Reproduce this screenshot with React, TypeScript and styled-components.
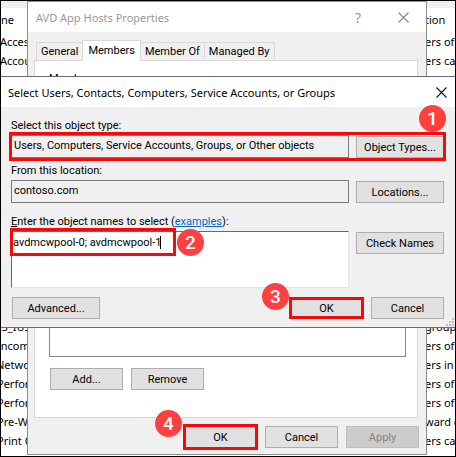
import React from "react";
import styled, { createGlobalStyle, css } from "styled-components";

const GlobalStyle = createGlobalStyle`
  * { box-sizing: border-box; }
  body { margin: 0; font-family: Roboto, "Liberation Sans", sans-serif; font-size: 11px; color: #000; }
  button, input, textarea { font: inherit; color: inherit; }
`;

const titleFont = css`
  font-family: "Noto Sans", "Open Sans", sans-serif;
  font-size: 11px;
`;

const Desktop = styled.main`
  position: relative;
  height: 100vh;
  min-height: 457px;
  overflow: hidden;
  border: 1px solid #000;
  background: #fff;
`;

const GroupList = styled.table`
  ${titleFont}
  width: 100%;
  table-layout: fixed;
  border-collapse: collapse;
  border-top: 5px solid #f0f0f0;

  tr { height: 19px; }
  td, th {
    padding: 0;
    line-height: 19px;
    font-weight: 400;
    text-align: left;
    white-space: nowrap;
    overflow: hidden;
  }
  thead tr { height: 26px; }
  thead th { border-top: 1px solid #7f8a94; }
`;

const ListArea = styled.div`
  border-top: 2px solid #f0f0f0;
`;

const DescriptionColumn = styled.col`
  width: 30px;
`;

const NameText = styled.span<{ $cut?: number }>`
  display: block;
  margin-left: ${(p) => -(p.$cut ?? 0)}px;
`;

const PropertiesWindow = styled.section`
  position: absolute;
  inset: 0 28px 1px 26px;
  display: flex;
  flex-direction: column;
  border: 1px solid #8c8c8c;
  background: #f0f0f0;
`;

const TitleBar = styled.header<{ $inactive?: boolean }>`
  ${titleFont}
  display: flex;
  align-items: center;
  flex: none;
  height: 30px;
  padding: 0 ${(p) => (p.$inactive ? 17 : 8)}px 0 ${(p) => (p.$inactive ? 8 : 7)}px;
  background: #fff;
  color: ${(p) => (p.$inactive ? "#999" : "#000")};
`;

const Title = styled.h1`
  flex: 1;
  margin: 0;
  font: inherit;
  white-space: nowrap;
`;

const TitleButton = styled.button`
  display: grid;
  place-items: center;
  width: 12px;
  height: 20px;
  margin-left: 33px;
  padding: 0;
  border: 0;
  background: none;
  font-size: 14px;
`;

const Tabs = styled.nav`
  display: flex;
  align-items: flex-end;
  flex: none;
  height: 28px;
  padding-left: 9px;
`;

const Tab = styled.button<{ $active?: boolean }>`
  z-index: ${(p) => (p.$active ? 1 : 0)};
  height: ${(p) => (p.$active ? 21 : 18)}px;
  margin: 0 0 ${(p) => (p.$active ? -1 : 0)}px -1px;
  padding: ${(p) => (p.$active ? "0 5px 2px" : "0 4px")};
  border: 1px solid #d9d9d9;
  border-bottom: 0;
  background: ${(p) => (p.$active ? "#fff" : "#f0f0f0")};
  white-space: nowrap;
`;

const TabPanel = styled.div`
  display: flex;
  flex-direction: column;
  flex: 1;
  margin: 0 8px 0 6px;
  padding: 9px 11px 27px 14px;
  border: 1px solid #d9d9d9;
  background: #fff;
`;

const MemberList = styled.div`
  flex: 1;
  margin-top: 4px;
  border: 1px solid #828790;
`;

const ButtonRow = styled.div<{ $end?: boolean }>`
  display: flex;
  gap: 8px;
  justify-content: ${(p) => (p.$end ? "flex-end" : "flex-start")};
`;

const MemberButtons = styled(ButtonRow)`
  padding: 11px 0 0 1px;
`;

const WindowFooter = styled(ButtonRow)`
  padding: 8px 7px 6px;
`;

const Button = styled.button<{ $wide?: boolean }>`
  flex: none;
  width: ${(p) => (p.$wide ? 88 : 73)}px;
  height: 22px;
  padding: 0;
  border: 1px solid #adadad;
  background: #e1e1e1;
  white-space: nowrap;

  &:disabled {
    border-color: #bfbfbf;
    background: #ccc;
    color: #838383;
  }
`;

const Anchor = styled.div<{ $grow?: boolean }>`
  position: relative;
  display: flex;
  ${(p) => p.$grow && css`flex: 1;`}
`;

const Highlight = styled.span<{ $inset: string }>`
  position: absolute;
  inset: ${(p) => p.$inset};
  border: 3px solid #f80808;
  pointer-events: none;
`;

const NamesHighlight = styled(Highlight)`
  width: 166px;
  height: 28px;
`;

const Badge = styled.span<{ $place: string }>`
  position: absolute;
  inset: ${(p) => p.$place};
  z-index: 2;
  display: grid;
  place-items: center;
  width: 27px;
  height: 27px;
  border-radius: 50%;
  background: #ff4040;
  color: #fff;
  font: 500 19px/27px Roboto, sans-serif;
`;

const Dialog = styled.section`
  position: absolute;
  inset: 75px 0 auto 0;
  border: solid #6b6b6b;
  border-width: 1px 0;
  background: #f0f0f0;
`;

const DialogBody = styled.form`
  padding: 10px 11px 8px 10px;
`;

const Label = styled.label<{ $gap?: number }>`
  display: block;
  margin-top: ${(p) => p.$gap ?? 0}px;
  height: 18px;
  line-height: 18px;
  white-space: nowrap;

  a { color: #0066cc; }
`;

const FieldRow = styled.div`
  position: relative;
  display: flex;
  align-items: flex-start;
  gap: 7px;

  > button { margin-top: 1px; }
`;

const ReadonlyField = styled.input`
  flex: 1;
  min-width: 0;
  height: 23px;
  padding: 0 2px 2px;
  border: 1px solid #7a7a7a;
  border-radius: 0;
  background: #f0f0f0;
`;

const NamesArea = styled.textarea`
  flex: 1;
  min-width: 0;
  height: 57px;
  padding: 2px 1px;
  border: 1px solid;
  border-color: #696969 #e3e3e3 #e3e3e3 #696969;
  border-radius: 0;
  outline: 0;
  background: #fff;
  line-height: 18px;
  resize: none;
`;

const Caret = styled.span`
  position: absolute;
  top: 5px;
  left: 149px;
  width: 1px;
  height: 13px;
  background: #000;
`;

const DialogFooter = styled.div`
  display: flex;
  justify-content: space-between;
  padding: 9px 0 0 1px;
`;

const Grip = styled.svg`
  position: absolute;
  right: 1px;
  bottom: 1px;
`;

const CloseIcon = ({ color }: { color: string }) => (
  <svg width="11" height="11" viewBox="0 0 11 11" stroke={color} strokeWidth="1.1">
    <path d="M.5.5l10 10M10.5.5l-10 10" />
  </svg>
);

const groups: [string, string, number][] = [
  ["Access", "ers of t", 1],
  ["Accou", "ers can", 1],
  ["Admini", "rs have", 1],
  ...Array.from({ length: 12 }, (): [string, string, number] => ["", "", 0]),
  ["IS_IUS", " group", 3],
  ["Incom", "ers of t", 4],
  ["Netwo", "ers in t", 5],
  ["Perfor", "ers of t", 4],
  ["Perfor", "ers of t", 4],
  ["Pre-W", "ward c", 4],
  ["Print O", "ers can", 4],
  ["RDS End", "s in this", 4],
];

export default function App() {
  return (
    <>
      <GlobalStyle />
      <Desktop>
        <ListArea>
          <GroupList>
            <colgroup>
              <col />
              <DescriptionColumn />
            </colgroup>
            <thead>
              <tr>
                <th><NameText>ne</NameText></th>
                <th><NameText>tion</NameText></th>
              </tr>
            </thead>
            <tbody>
              {groups.map(([name, description, cut], i) => (
                <tr key={i}>
                  <td><NameText $cut={cut}>{name}</NameText></td>
                  <td><NameText>{description}</NameText></td>
                </tr>
              ))}
            </tbody>
          </GroupList>
        </ListArea>

        <PropertiesWindow>
          <TitleBar $inactive>
            <Title>AVD App Hosts Properties</Title>
            <TitleButton aria-label="Help">?</TitleButton>
            <TitleButton aria-label="Close"><CloseIcon color="#888" /></TitleButton>
          </TitleBar>
          <Tabs>
            <Tab>General</Tab>
            <Tab $active>Members</Tab>
            <Tab>Member Of</Tab>
            <Tab>Managed By</Tab>
          </Tabs>
          <TabPanel>
            <Label as="span">Members:</Label>
            <MemberList />
            <MemberButtons>
              <Button>Add...</Button>
              <Button>Remove</Button>
            </MemberButtons>
          </TabPanel>
          <WindowFooter $end>
            <Anchor>
              <Button>OK</Button>
              <Highlight $inset="-2px -1px" />
              <Badge $place="-16px auto auto -29px">4</Badge>
            </Anchor>
            <Button>Cancel</Button>
            <Button disabled>Apply</Button>
          </WindowFooter>
        </PropertiesWindow>

        <Dialog role="dialog" aria-labelledby="dialog-title">
          <TitleBar>
            <Title id="dialog-title">Select Users, Contacts, Computers, Service Accounts, or Groups</Title>
            <TitleButton aria-label="Close"><CloseIcon color="#111" /></TitleButton>
          </TitleBar>
          <DialogBody onSubmit={(e) => e.preventDefault()}>
            <Label htmlFor="object-type">Select this object type:</Label>
            <FieldRow>
              <ReadonlyField id="object-type" readOnly value="Users, Computers, Service Accounts, Groups, or Other objects" />
              <Button type="button" $wide>Object Types...</Button>
              <Highlight $inset="-3px -2px" />
              <Badge $place="-30px -2px auto auto">1</Badge>
            </FieldRow>

            <Label htmlFor="location" $gap={4}>From this location:</Label>
            <FieldRow>
              <ReadonlyField id="location" readOnly value="contoso.com" />
              <Button type="button" $wide>Locations...</Button>
            </FieldRow>

            <Label htmlFor="names" $gap={10}>
              <u>E</u>nter the object names to select (<a href="#examples">examples</a>):
            </Label>
            <FieldRow>
              <Anchor $grow>
                <NamesArea id="names" defaultValue="avdmcwpool-0; avdmcwpool-1" />
                <Caret />
                <NamesHighlight $inset="-3px auto auto -1px" />
                <Badge $place="-2px auto auto 166px">2</Badge>
              </Anchor>
              <Button type="button" $wide>Check Names</Button>
            </FieldRow>

            <DialogFooter>
              <Button type="button" $wide>Advanced...</Button>
              <ButtonRow>
                <Anchor>
                  <Button type="submit">OK</Button>
                  <Highlight $inset="0 -1px" />
                  <Badge $place="-14px auto auto -28px">3</Badge>
                </Anchor>
                <Button type="button">Cancel</Button>
              </ButtonRow>
            </DialogFooter>
          </DialogBody>
          <Grip width="8" height="8" viewBox="0 0 8 8" fill="#bfbfbf">
            <path d="M6 0h2v2h-2zM3 3h2v2h-2zM6 3h2v2h-2zM0 6h2v2h-2zM3 6h2v2h-2zM6 6h2v2h-2z" />
          </Grip>
        </Dialog>
      </Desktop>
    </>
  );
}
